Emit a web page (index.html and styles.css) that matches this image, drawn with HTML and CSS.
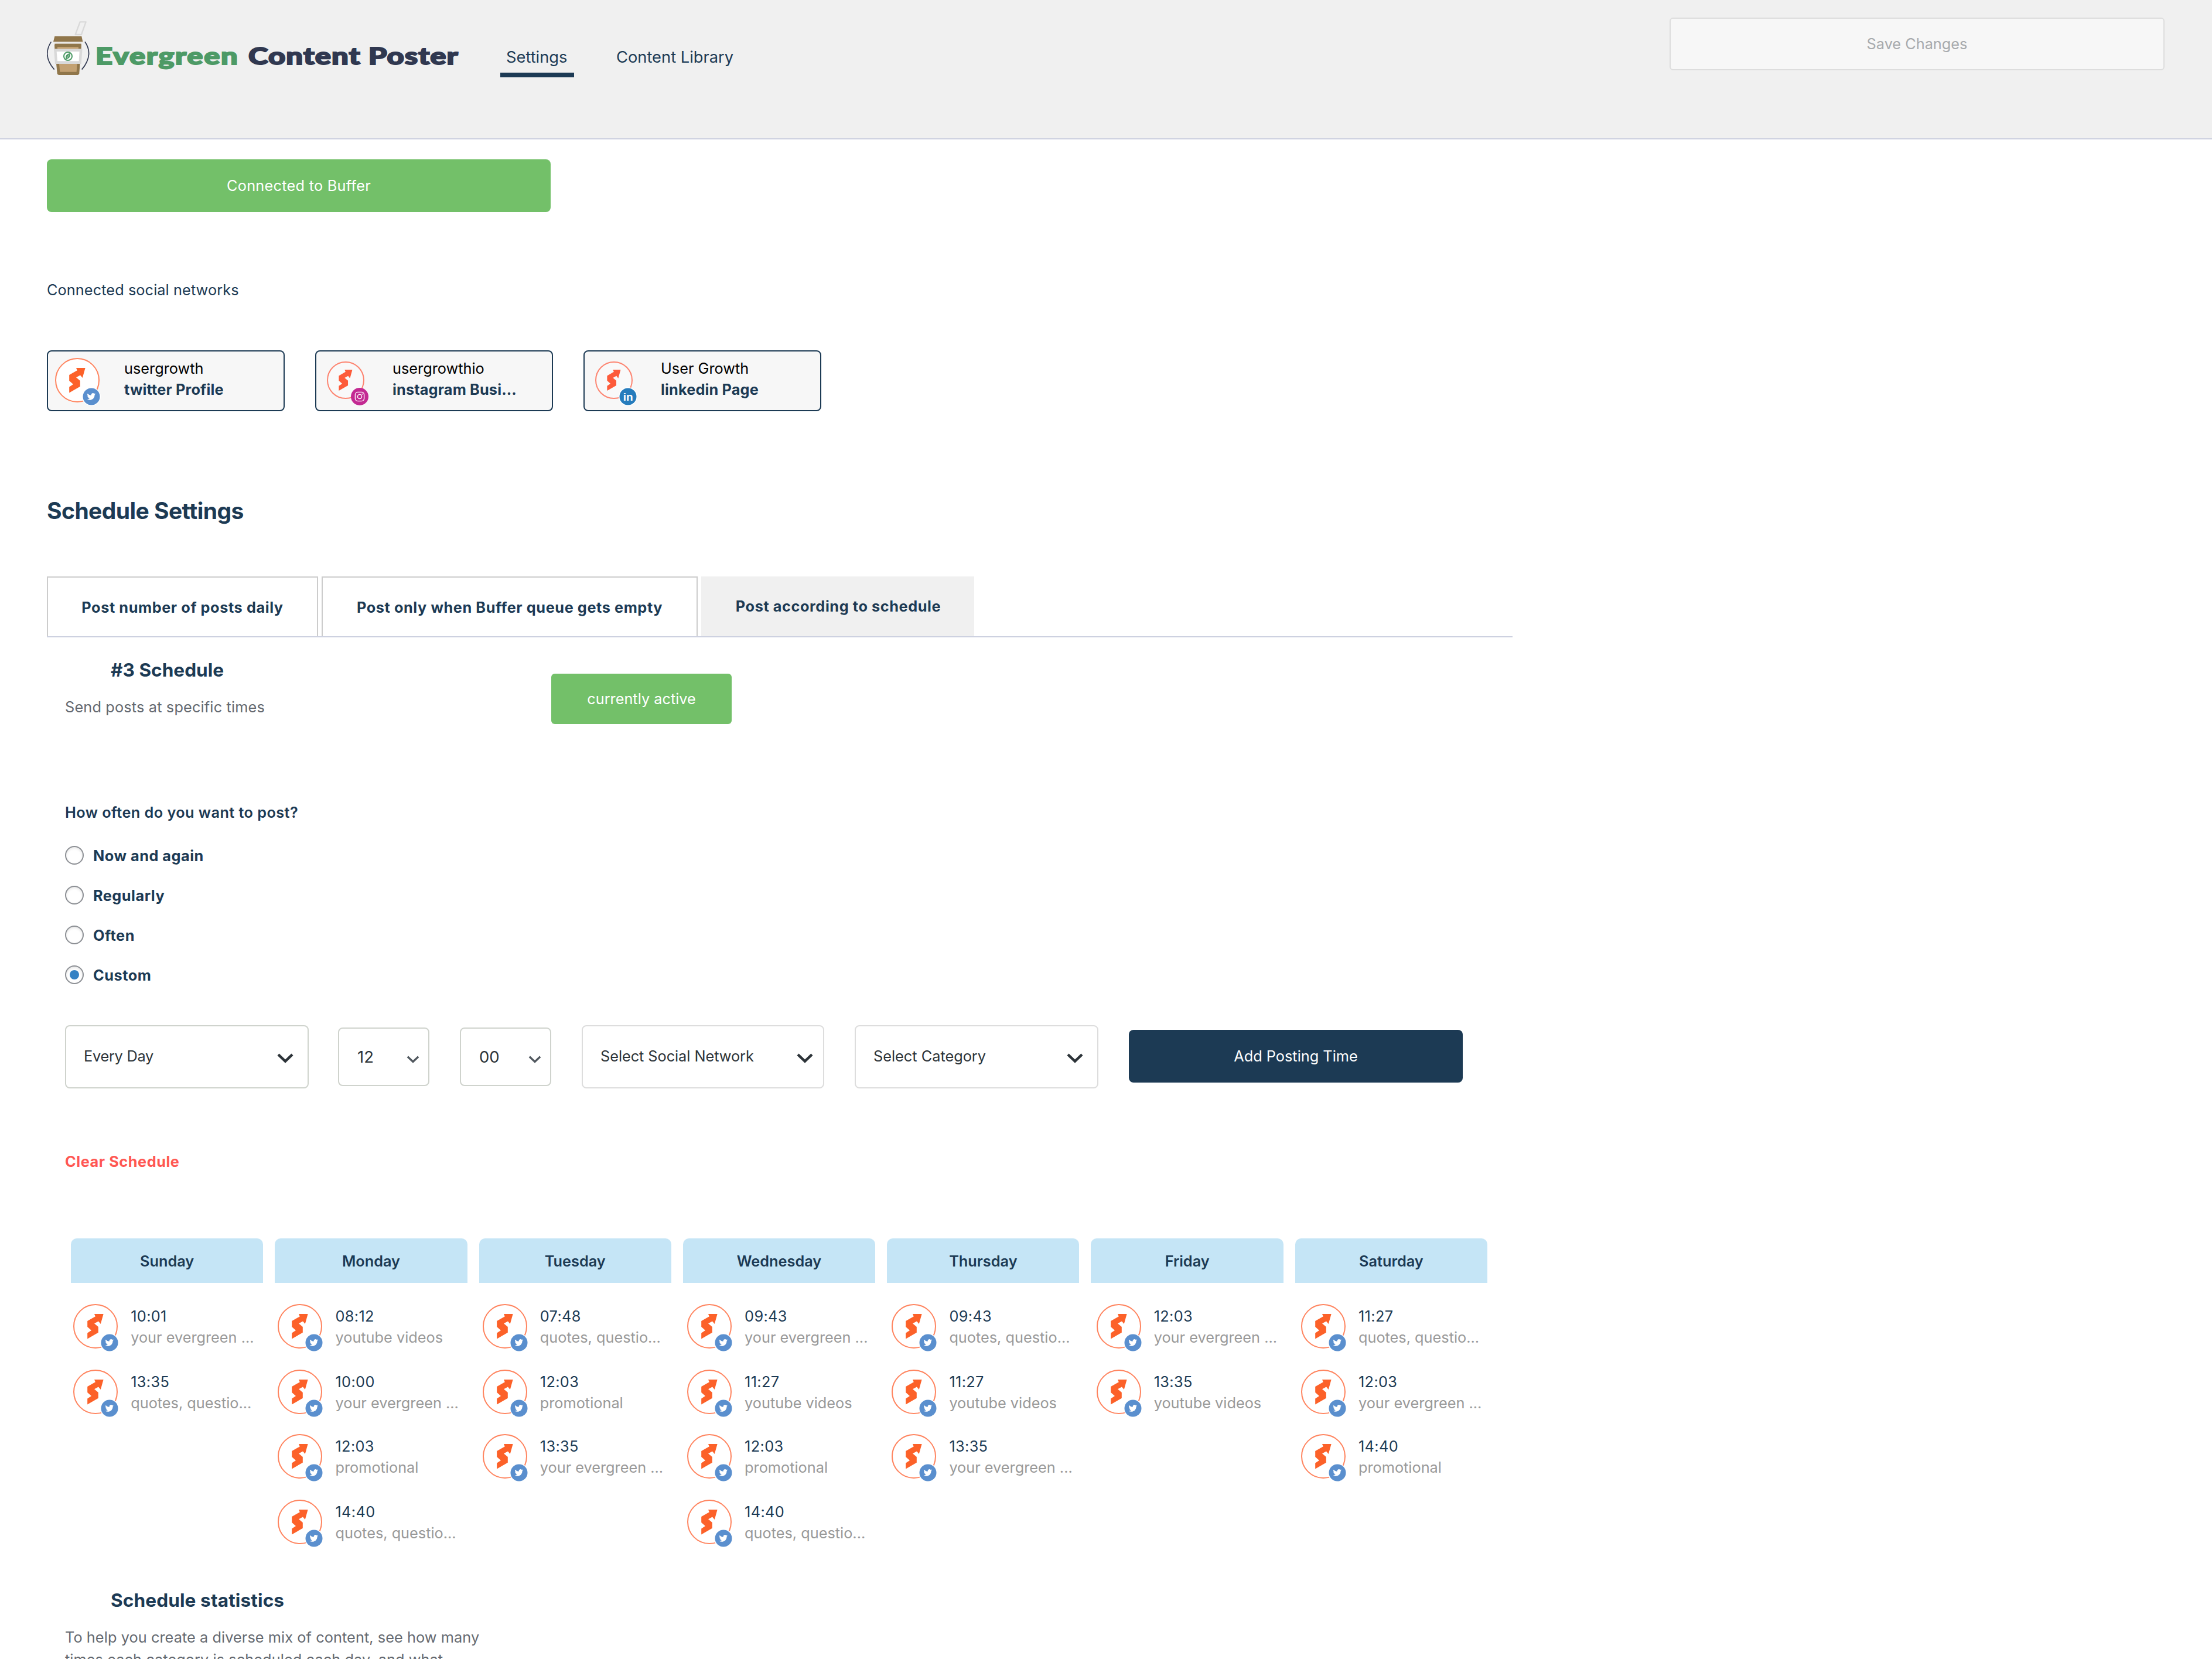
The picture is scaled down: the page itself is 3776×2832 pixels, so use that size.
FILE: index.html
```html
<!DOCTYPE html>
<html lang="en">
<head>
<meta charset="utf-8">
<title>Evergreen Content Poster</title>
<link rel="stylesheet" href="styles.css">
</head>
<body>
<svg class="sprite" width="0" height="0" aria-hidden="true">
  <symbol id="mark" viewBox="0 0 76 76">
    <circle cx="38" cy="38" r="37" fill="#fff" stroke="#ff8560" stroke-width="2"/>
    <path fill="#fc6129" d="M36 17H51.6L46.8 34 43 29.5 36 33.2 42.8 39V48.8L24.2 59.5V49.6L31 45 24.2 39V29L37.8 21.2Z"/>
  </symbol>
  <symbol id="mark-small" viewBox="0 0 76 76">
    <circle cx="38" cy="38" r="36.8" fill="#f9f9f9" stroke="#fd8571" stroke-width="2.4"/>
    <path fill="#fd5b3a" d="M36 17H51.6L46.8 34 43 29.5 36 33.2 42.8 39V48.8L24.2 59.5V49.6L31 45 24.2 39V29L37.8 21.2Z"/>
  </symbol>
  <symbol id="twitter" viewBox="0 0 32 32">
    <circle cx="16" cy="16" r="16" fill="#fff"/>
    <circle cx="16" cy="16" r="14.5" fill="#5a8fce"/>
    <path transform="translate(8.6 8.8) scale(.6)" fill="#fff" d="M23.95 4.57a10 10 0 0 1-2.82.77 4.96 4.96 0 0 0 2.16-2.72c-.95.55-2 .95-3.13 1.18a4.92 4.92 0 0 0-8.38 4.48C7.69 8.1 4.07 6.13 1.64 3.16a4.92 4.92 0 0 0 1.52 6.57 4.9 4.9 0 0 1-2.23-.61v.06c0 2.38 1.7 4.37 3.95 4.83a5 5 0 0 1-2.21.08 4.94 4.94 0 0 0 4.6 3.42A9.87 9.87 0 0 1 0 19.54a13.99 13.99 0 0 0 7.55 2.21c9.05 0 14-7.5 14-13.98l-.02-.64a9.94 9.94 0 0 0 2.42-2.56z"/>
  </symbol>
  <symbol id="chev" viewBox="0 0 28 17">
    <path d="M2 2.2 14 13.6 26 2.2" fill="none" stroke="currentColor" stroke-width="4.4"/>
  </symbol>
</svg>

<header class="top">
  <div class="brand">
    <svg class="cup" viewBox="30 45 220 285">
      <path d="M200 52H230L207 117H176Z" fill="none" stroke="#d9d9d9" stroke-width="7" stroke-linejoin="round"/>
      <path d="M70 126H208L214 154H63Z" fill="#90764a"/>
      <path d="M61 155H215M68 162H208" stroke="#d3cbbd" stroke-width="3"/>
      <path d="M74 164H203Q208 164 207 170L206 192H70L69 170Q69 164 74 164Z" fill="#90764a"/>
      <path d="M84 180H192V192H84Z" fill="#c3a172"/>
      <path d="M78 264H200L196 316Q195 324 188 324H91Q84 324 83 316Z" fill="#90764a"/>
      <path d="M93 266H185L182 308H97Z" fill="#c3a172"/>
      <path d="M66 190H212L206 267H72Z" fill="#d9d9d9"/>
      <path d="M80 204H197L194 253H84Z" fill="#fff"/>
      <circle cx="138" cy="228" r="21" fill="#fff" stroke="#4d9a66" stroke-width="6"/>
      <path d="M127 240Q122 218 149 212Q154 236 134 242L124 247Z" fill="#4d9a66"/>
      <path d="M133 238 144 220" stroke="#fff" stroke-width="2"/>
      <path d="M52 154Q32 184 32 217 34 258 68 296M225 154Q246 184 245 217 242 258 209 296" fill="none" stroke="#303850" stroke-width="5"/>
    </svg>
    <div class="wordmark"><span class="green">Evergreen</span><span class="navy">Content Poster</span></div>
  </div>
  <nav class="nav">
    <a class="nav-item current">Settings</a>
    <a class="nav-item">Content Library</a>
  </nav>
  <div class="save">Save Changes</div>
</header>

<main class="page">
  <div class="btn green-btn connect">Connected to Buffer</div>
  <p class="label">Connected social networks</p>

  <div class="cards">
    <div class="card">
      <div class="avatar"><svg class="pic"><use href="#mark"/></svg><svg class="badge"><use href="#twitter"/></svg></div>
      <div class="who"><span class="name">usergrowth</span><span class="kind">twitter Profile</span></div>
    </div>
    <div class="card">
      <div class="avatar small"><svg class="pic"><use href="#mark-small"/></svg>
        <svg class="badge" viewBox="0 0 32 32"><circle cx="16" cy="16" r="15" fill="#c32a92"/><g fill="none" stroke="#fff" stroke-width="1.4"><rect x="8.4" y="8.4" width="15.2" height="15.2" rx="4.4"/><circle cx="16" cy="16" r="3.6"/></g><circle cx="20.3" cy="11.8" r="1" fill="#fff"/></svg></div>
      <div class="who"><span class="name">usergrowthio</span><span class="kind">instagram Busi...</span></div>
    </div>
    <div class="card">
      <div class="avatar small"><svg class="pic"><use href="#mark-small"/></svg>
        <svg class="badge" viewBox="0 0 32 32"><circle cx="16" cy="16" r="16" fill="#fff"/><circle cx="16" cy="16" r="14.5" fill="#267cbc"/><text x="16.3" y="22.6" text-anchor="middle" class="in">in</text></svg></div>
      <div class="who"><span class="name">User Growth</span><span class="kind">linkedin Page</span></div>
    </div>
  </div>

  <h2 class="title">Schedule Settings</h2>

  <div class="tabs">
    <div class="tab">Post number of posts daily</div>
    <div class="tab wide">Post only when Buffer queue gets empty</div>
    <div class="tab on">Post according to schedule</div>
  </div>

  <section class="panel">
    <div class="intro">
      <div class="intro-text">
        <h3 class="sub">#3 Schedule</h3>
        <p class="hint">Send posts at specific times</p>
      </div>
      <div class="btn green-btn active">currently active</div>
    </div>

    <p class="question">How often do you want to post?</p>
    <ul class="radios">
      <li><i class="radio"></i><span>Now and again</span></li>
      <li><i class="radio"></i><span>Regularly</span></li>
      <li><i class="radio"></i><span>Often</span></li>
      <li><i class="radio checked"></i><span>Custom</span></li>
    </ul>

    <div class="form">
      <div class="select day"><span>Every Day</span><svg class="chev"><use href="#chev"/></svg></div>
      <div class="select num"><span>12</span><svg class="chev"><use href="#chev"/></svg></div>
      <div class="select num"><span>00</span><svg class="chev"><use href="#chev"/></svg></div>
      <div class="select light net"><span>Select Social Network</span><svg class="chev"><use href="#chev"/></svg></div>
      <div class="select light"><span>Select Category</span><svg class="chev"><use href="#chev"/></svg></div>
      <div class="btn add">Add Posting Time</div>
    </div>

    <p class="clear">Clear Schedule</p>

    <div class="week-head" id="head"></div>
    <div class="week" id="week"></div>

    <h3 class="sub stats">Schedule statistics</h3>
    <p class="hint blurb">To help you create a diverse mix of content, see how many<br>times each category is scheduled each day, and what</p>
  </section>
</main>
<script src="schedule.js"></script>
</body>
</html>
```
FILE: styles.css
```css
* { box-sizing: border-box; margin: 0; padding: 0; }
body { height: 2832px; overflow: hidden; background: #fff; color: #1c3a54; font: 25.3px/36px Inter, "Liberation Sans", sans-serif; white-space: nowrap; }
svg { display: block; }
.sprite { position: absolute; }
.top { display: flex; align-items: flex-start; height: 238px; padding: 0 81px 0 80px; background: #f0f0f0; border-bottom: 2px solid #cdd1e0; }
.brand { display: flex; align-items: flex-start; width: 774px; padding-top: 35px; }
.cup { width: 73.3px; height: 95px; }
.wordmark { display: flex; margin: 36px 0 0 10px; font: 900 40px/48px Lato, sans-serif; -webkit-text-stroke: 2px; }
.wordmark span { transform: scaleX(1.27); transform-origin: left center; }
.green { width: 261px; color: #4d9a66; letter-spacing: 1.3px; }
.navy { color: #303850; letter-spacing: .8px; }
.nav { display: flex; gap: 62px; padding-top: 65px; font-size: 27.3px; }
.nav-item { height: 67px; padding: 15px 10px 0; border-bottom: 8px solid transparent; }
.nav-item.current { width: 126px; border-color: #1c3a54; }
.save { width: 845px; height: 90px; margin: 30px 0 0 auto; border: 2px solid #ddd; border-radius: 6px; background: #f7f7f7; color: #a7aaad; text-align: center; line-height: 86px; }
.page { padding: 34px 0 0 80px; }
.btn { border-radius: 8px; color: #fff; text-align: center; height: 90px; line-height: 90px; }
.green-btn { background: #73c069; }
.connect { width: 860px; letter-spacing: .25px; }
.label { margin-top: 115px; letter-spacing: .08px; }
.cards { display: flex; gap: 52px; margin-top: 85px; }
.card { display: flex; width: 406px; height: 104px; padding: 11px 0 0 12px; border: 2px solid #1c3a54; border-radius: 8px; background: #f7f7f7; }
.avatar { position: relative; width: 76px; height: 76px; flex: none; }
.pic { width: 76px; height: 76px; }
.small { padding: 6px; }
.small .pic { width: 64px; height: 64px; }
.badge { position: absolute; left: 46px; top: 50px; width: 32px; height: 32px; }
.in { font: bold 19px "Liberation Sans", sans-serif; fill: #fff; }
.who { display: flex; flex-direction: column; align-items: flex-start; padding: 0 0 0 42px; }
.name { color: #000; }
.kind { font-weight: 700; letter-spacing: .15px; }
.title { margin-top: 145px; font-size: 39px; line-height: 50px; font-weight: 700; letter-spacing: -.55px; }
.tabs { display: flex; gap: 6px; width: 2502px; height: 104px; margin-top: 87px; border-bottom: 2px solid #cdd1e0; font-weight: 700; letter-spacing: .58px; }
.tab { width: 463px; height: 102px; padding-top: 33px; border: 2px solid #ccc; border-bottom: 0; text-align: center; }
.wide { width: 642px; }
.on { width: 466px; padding-left: 2px; border: 0; background: #f0f0f0; }
.panel { padding-left: 31px; }
.intro { display: flex; height: 148px; }
.intro-text { width: 830px; padding-top: 36px; }
.sub { padding-left: 78px; font-size: 31.6px; line-height: 40px; font-weight: 700; }
.hint { margin-top: 25px; color: #646970; letter-spacing: .16px; }
.active { width: 308px; height: 86px; line-height: 86px; margin-top: 62px; border-radius: 6px; }
.question { margin-top: 133px; font-weight: 600; letter-spacing: .43px; }
.radios { display: grid; row-gap: 36px; margin-top: 39px; list-style: none; font-weight: 700; letter-spacing: .5px; }
.radios li { display: flex; gap: 16px; height: 32px; line-height: 34px; }
.radio { display: grid; place-items: center; width: 32px; height: 32px; border: 2px solid #8c8f94; border-radius: 50%; box-shadow: inset 0 2px 4px rgba(0,0,0,.1); }
.checked::before { content: ""; width: 16px; height: 16px; border-radius: 50%; background: #3582c4; }
.form { display: flex; align-items: center; gap: 52px; margin-top: 70px; }
.select { display: flex; justify-content: space-between; align-items: center; width: 416px; height: 108px; padding: 0 24px 2px 30px; border: 2px solid #cfd3cd; border-radius: 8px; color: #2c3338; }
.chev { width: 28px; height: 17px; margin-top: 6px; }
.day { margin-right: -2px; letter-spacing: -.25px; }
.num { width: 156px; height: 100px; padding: 0 15px 0 31px; font-size: 27.5px; }
.num .chev { width: 22px; height: 13px; margin-top: 9px; color: #50575e; }
.light { border-color: #ddd; }
.net { width: 414px; padding-right: 17px; letter-spacing: -.05px; }
.add { width: 570px; background: #1c3a54; margin-top: -2px; }
.clear { margin-top: 107px; color: #ff5752; font-weight: 700; letter-spacing: .55px; }
.week-head { display: grid; grid-template-columns: repeat(7, 328.3px); column-gap: 20px; margin: 113px 0 0 10px; }
.day-name { height: 76px; border-radius: 10px 10px 0 0; background: #c5e5f6; text-align: center; line-height: 78px; font-weight: 600; }
.week { display: grid; grid-template-columns: repeat(7, 349.3px); height: 446px; margin: 0 0 0 14.2px; padding-top: 36px; }
.slot { display: flex; height: 76px; margin-bottom: 36px; }
.slot:nth-child(2) { margin-bottom: 34px; }
.slot-text { display: flex; flex-direction: column; align-items: flex-start; padding: 3px 0 0 22px; }
.time { letter-spacing: .35px; }
.cat-name { color: #999; }
.stats { margin-top: 76px; letter-spacing: .1px; }
.blurb { margin-top: 24px; line-height: 38px; letter-spacing: .07px; }
```
FILE: schedule.js
```js
const ev = "your evergreen ...", qu = "quotes, questio...", yt = "youtube videos", pr = "promotional";
const week = {
  Sunday: [["10:01", ev], ["13:35", qu]],
  Monday: [["08:12", yt], ["10:00", ev], ["12:03", pr], ["14:40", qu]],
  Tuesday: [["07:48", qu], ["12:03", pr], ["13:35", ev]],
  Wednesday: [["09:43", ev], ["11:27", yt], ["12:03", pr], ["14:40", qu]],
  Thursday: [["09:43", qu], ["11:27", yt], ["13:35", ev]],
  Friday: [["12:03", ev], ["13:35", yt]],
  Saturday: [["11:27", qu], ["12:03", ev], ["14:40", pr]]
};
for (const [day, slots] of Object.entries(week)) {
  document.getElementById("head").insertAdjacentHTML("beforeend", `<div class="day-name">${day}</div>`);
  document.getElementById("week").insertAdjacentHTML("beforeend", `<div class="day-col">${slots.map(([time, name]) =>
    `<div class="slot"><div class="avatar"><svg class="pic"><use href="#mark"/></svg><svg class="badge"><use href="#twitter"/></svg></div><div class="slot-text"><span class="time">${time}</span><span class="cat-name">${name}</span></div></div>`).join("")}</div>`);
}
```
